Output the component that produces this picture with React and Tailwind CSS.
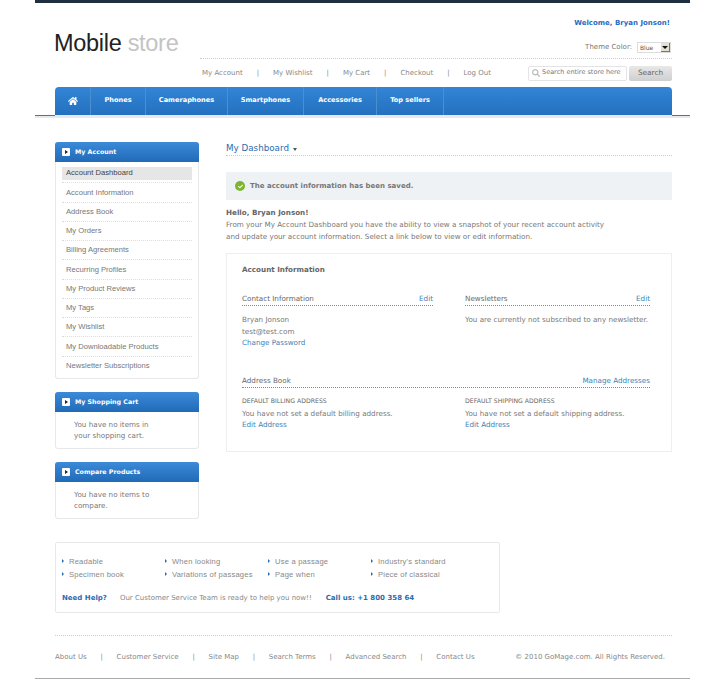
import React from 'react';
import { FaHome, FaCheck, FaSearch } from 'react-icons/fa';

const sans = "font-['DejaVu_Sans',sans-serif]";
const arial = "font-['Liberation_Sans',Arial,sans-serif]";

const accountLinks = [
  'Account Dashboard', 'Account Information', 'Address Book', 'My Orders', 'Billing Agreements',
  'Recurring Profiles', 'My Product Reviews', 'My Tags', 'My Wishlist', 'My Downloadable Products',
  'Newsletter Subscriptions',
];
const topLinks = ['My Account', 'My Wishlist', 'My Cart', 'Checkout', 'Log Out'];
const navItems = [
  { label: 'Phones', w: 'w-[55px]' },
  { label: 'Cameraphones', w: 'w-[82px]' },
  { label: 'Smartphones', w: 'w-[76px]' },
  { label: 'Accessories', w: 'w-[73px]' },
  { label: 'Top sellers', w: 'w-[67px]' },
];
const bullets = [
  ['Readable', 'Specimen book'],
  ['When looking', 'Variations of passages'],
  ['Use a passage', 'Page when'],
  ["Industry's standard", 'Piece of classical'],
];
const footerLinks = ['About Us', 'Customer Service', 'Site Map', 'Search Terms', 'Advanced Search', 'Contact Us'];

function SideBox({ title, children, className = '' }) {
  return (
    <div className={`w-36 rounded-[3px] border-x border-b border-[#e8e8e8] ${className}`}>
      <div className="-mx-px flex h-[20px] items-center gap-[5px] rounded-t-[3px] bg-gradient-to-b from-[#3c8ad8] to-[#1f6bb8] pl-[7px]">
        <span className="flex h-[8px] w-[8px] items-center justify-center rounded-[1px] bg-white">
          <span className="h-0 w-0 border-y-[2px] border-l-[3px] border-y-transparent border-l-[#222]" />
        </span>
        <span className="text-[6.3px] font-bold text-white">{title}</span>
      </div>
      {children}
    </div>
  );
}

function SectionHead({ title, action, className = '' }) {
  return (
    <div className={`flex h-[13px] items-start justify-between border-b border-dotted border-[#888] whitespace-nowrap ${className}`}>
      <span className="text-[7.2px] leading-[11px] text-[#666]">{title}</span>
      {action && <a className="text-[7.2px] leading-[11px] text-[#3c7fb8]">{action}</a>}
    </div>
  );
}

export default function App() {
  return (
    <div className={`${sans} mx-auto h-[680px] w-[725px] overflow-hidden bg-white text-[#777]`}>
      <div className="ml-[35px] w-[655px]">
        <div className="h-[3px] bg-[#1f2f3f]" />

        {/* Header */}
        <div className="pl-5 pr-[18px]">
          <div className="flex h-[55px] justify-between">
            <div className={`${arial} -ml-px mt-[26px] text-[23.5px] leading-[28px] tracking-[-0.3px] text-[#222]`}>
              Mobile <span className="text-[#c4c4c4]">store</span>
            </div>
            <div className="flex flex-col items-end pt-[15px]">
              <div className="pr-[2px] text-[7px] leading-[10px] font-bold text-[#2a6cc0]">Welcome, Bryan Jonson!</div>
              <div className="mt-[14px] flex h-[11px] items-center gap-[5px] pr-px">
                <span className="text-[7px] text-[#777]">Theme Color:</span>
                <div className="flex h-[11px] w-[34px] items-center justify-between border border-[#ddd] pl-[2px]">
                  <span className="text-[6px] text-[#555]">Blue</span>
                  <span className="flex h-[9px] w-[9px] items-center justify-center border-r border-b border-[#777] bg-[#e4e0d4]">
                    <span className="h-0 w-0 border-x-[3px] border-t-[3px] border-x-transparent border-t-[#111]" />
                  </span>
                </div>
              </div>
            </div>
          </div>

          <div className="ml-[145px] flex h-[29px] items-center justify-between border-t border-dotted border-[#ccc] whitespace-nowrap">
            <div className="flex items-center pl-[2px] text-[7px] text-[#888]">
              {topLinks.map((l, i) => (
                <React.Fragment key={l}>
                  {i > 0 && <span className="mx-[14px] text-[#888]">|</span>}
                  <span>{l}</span>
                </React.Fragment>
              ))}
            </div>
            <div className="flex items-center gap-[2px]">
              <div className="flex h-[15px] w-[99px] items-center gap-[2px] rounded-[2px] border border-[#e4e4e4] pl-[3px] text-[6.5px] text-[#777]">
                <FaSearch className="h-[8px] w-[8px] text-[#bbb]" />
                <span>Search entire store here</span>
              </div>
              <div className="flex h-[15px] w-[43px] items-center justify-center rounded-[2px] bg-gradient-to-b from-[#e8e8e8] to-[#cfcfcf] text-[7.3px] text-[#666]">
                Search
              </div>
            </div>
          </div>

          {/* Main nav */}
          <div className="flex h-[28px] rounded-t-[4px] bg-gradient-to-b from-[#3285d6] to-[#2470bf]">
            <div className="flex w-[36px] items-center justify-center border-r border-[#4a8fd0]">
              <FaHome className="h-[10px] w-[10px] text-white" />
            </div>
            {navItems.map((n) => (
              <div key={n.label} className={`${n.w} flex items-center justify-center border-r border-[#4a8fd0] text-[6.6px] font-bold text-white`}>
                {n.label}
              </div>
            ))}
          </div>
        </div>
        <div className="flex h-[3px] bg-[#e6e9ed]">
          <div className="h-px w-5 bg-[#2f7cc8]" />
          <div className="flex-1" />
          <div className="h-px w-[18px] bg-[#2f7cc8]" />
        </div>

        {/* Body */}
        <div className="flex gap-[27px] pl-5 pr-[18px] pt-[24px]">
          <div className="w-36">
            <SideBox title="My Account">
              <ul className={`${arial} px-[6px] pb-[2px] pt-[2px] text-[7.6px] text-[#777]`}>
                {accountLinks.map((l, i) => (
                  <li key={l} className="flex h-[19.25px] items-center border-b border-dotted border-[#ddd] whitespace-nowrap last:border-b-0">
                    <span className={`flex h-[13px] w-full items-center px-[4px] ${i === 0 ? 'bg-[#e6e6e6] text-[#444]' : ''}`}>{l}</span>
                  </li>
                ))}
              </ul>
            </SideBox>
            <SideBox title="My Shopping Cart" className="mt-[13px]">
              <p className="h-[36px] pl-[18px] pr-[40px] pt-[7px] text-[7.2px] leading-[11.5px] text-[#777]">
                You have no items in your shopping cart.
              </p>
            </SideBox>
            <SideBox title="Compare Products" className="mt-[13px]">
              <p className="h-[36px] pl-[18px] pr-[40px] pt-[7px] text-[7.2px] leading-[11.5px] text-[#777]">
                You have no items to compare.
              </p>
            </SideBox>
          </div>

          <div className="w-[446px]">
            <div className="flex h-[14px] items-start gap-[4px] border-b border-dotted border-[#ccc]">
              <span className="text-[8.75px] leading-[13px] text-[#2a6cb0]">My Dashboard</span>
              <span className="mt-[6px] h-0 w-0 border-x-[2px] border-t-[3px] border-x-transparent border-t-[#555]" />
            </div>
            <div className="mt-[16px] flex h-[28px] items-center gap-[5px] bg-[#eef2f5] pl-[9px]">
              <span className="flex h-[10px] w-[10px] items-center justify-center rounded-full bg-[#7db52f]">
                <FaCheck className="h-[5px] w-[5px] text-white" />
              </span>
              <span className="text-[7px] font-bold text-[#777]">The account information has been saved.</span>
            </div>
            <div className="mt-[7px] text-[7.2px] leading-[12px] whitespace-nowrap">
              <div className="font-bold text-[#666]">Hello, Bryan Jonson!</div>
              <p>From your My Account Dashboard you have the ability to view a snapshot of your recent account activity</p>
              <p>and update your account information. Select a link below to view or edit information.</p>
            </div>

            <div className="mt-[10px] h-[199px] border border-[#eee] pl-[15px] pr-[21px] pt-[10px]">
              <div className="text-[7.2px] leading-[12px] font-bold text-[#666]">Account Information</div>
              <div className="mt-[17px] grid grid-cols-[191px_1fr] gap-x-[32px]">
                <div>
                  <SectionHead title="Contact Information" action="Edit" />
                  <div className="mt-[8px] text-[7.2px] leading-[11.5px]">
                    <div>Bryan Jonson</div>
                    <div>test@test.com</div>
                    <a className="text-[#3c7fb8]">Change Password</a>
                  </div>
                </div>
                <div>
                  <SectionHead title="Newsletters" action="Edit" />
                  <div className="mt-[8px] text-[7.2px] leading-[11.5px] whitespace-nowrap">You are currently not subscribed to any newsletter.</div>
                </div>
              </div>
              <SectionHead title="Address Book" action="Manage Addresses" className="mt-[26px]" />
              <div className="mt-[8px] grid grid-cols-[191px_1fr] gap-x-[32px]">
                {[['DEFAULT BILLING ADDRESS', 'You have not set a default billing address.'], ['DEFAULT SHIPPING ADDRESS', 'You have not set a default shipping address.']].map(([h, t]) => (
                  <div key={h}>
                    <div className="text-[6.2px] leading-[10px] text-[#666]">{h}</div>
                    <div className="mt-[2px] text-[7.2px] leading-[11.5px]">{t}</div>
                    <a className="block text-[7.2px] leading-[11.5px] text-[#3c7fb8]">Edit Address</a>
                  </div>
                ))}
              </div>
            </div>
          </div>
        </div>

        {/* Footer */}
        <div className="pl-5 pr-[18px]">
          <div className="mt-[23px] h-[71px] w-[445px] rounded-[2px] border border-[#e8e8e8] px-[6px] pt-[12px]">
            <div className={`${arial} grid grid-cols-[103px_103px_103px_1fr] text-[7.6px] leading-[13px] tracking-[0.2px] text-[#888]`}>
              {bullets.map((col) => (
                <div key={col[0]}>
                  {col.map((b) => (
                    <div key={b} className="flex items-center gap-[5px] whitespace-nowrap">
                      <span className="h-0 w-0 border-y-[2px] border-l-[2px] border-y-transparent border-l-[#2a6cb0]" />
                      {b}
                    </div>
                  ))}
                </div>
              ))}
            </div>
            <div className="mt-[11px] flex items-center whitespace-nowrap text-[7px] leading-[12px]">
              <span className="font-bold text-[#2a6cb0]">Need Help?</span>
              <span className="ml-[13px] text-[#888]">Our Customer Service Team is ready to help you now!!</span>
              <span className="ml-[14px] font-bold text-[#2a6cb0]">Call us: +1 800 358 64</span>
            </div>
          </div>

          <div className="mt-[22px] flex h-[43px] items-center justify-between border-t border-dotted border-[#ccc] pr-[7px] text-[7px] whitespace-nowrap text-[#888]">
            <div className="flex items-center">
              {footerLinks.map((l, i) => (
                <React.Fragment key={l}>
                  {i > 0 && <span className="mx-[13.75px]">|</span>}
                  <span>{l}</span>
                </React.Fragment>
              ))}
            </div>
            <span>© 2010 GoMage.com. All Rights Reserved.</span>
          </div>
        </div>
        <div className="h-px bg-[#aaa]" />
      </div>
    </div>
  );
}
